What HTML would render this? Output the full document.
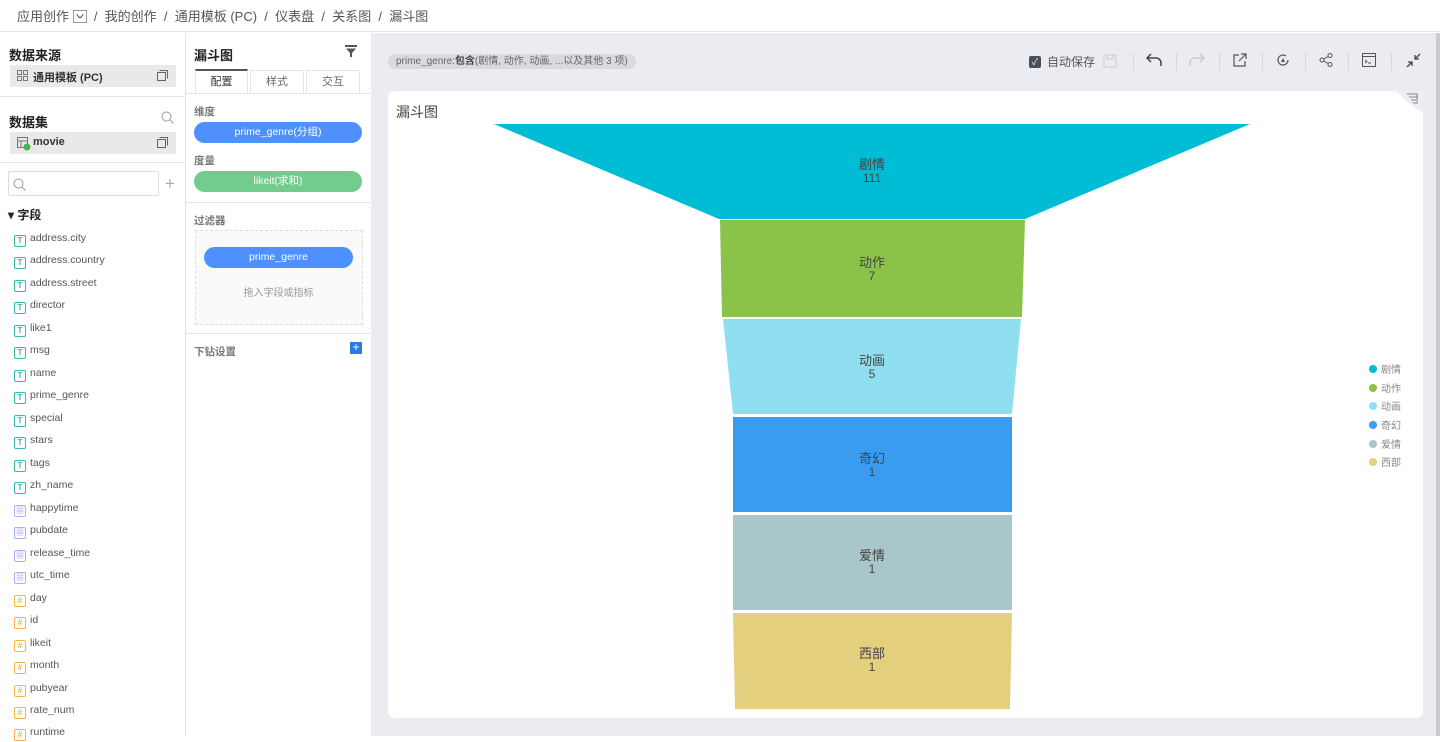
<!DOCTYPE html>
<html><head><meta charset="utf-8"><style>
*{box-sizing:border-box;margin:0;padding:0}
body{width:1440px;height:736px;overflow:hidden;background:#fff;font-family:"Liberation Sans","Noto Sans CJK SC",sans-serif;color:#333;position:relative}
.abs{position:absolute}
.top{left:0;top:0;width:1440px;height:32px;border-bottom:1px solid #e4e4e4;font-size:13px;color:#555;padding:6px 0 0 17px}
.left{left:0;top:33px;width:186px;height:703px;border-right:1px solid #e4e4e4}
.mid{left:186px;top:33px;width:185px;height:703px;background:#fff}
.main{left:371px;top:33px;width:1069px;height:703px;background:#ebecf1}
.h{font-size:13px;font-weight:bold;color:#222}
.box{background:#e9e9e9;height:22px;font-size:11px;font-weight:bold;color:#333;padding:4px 0 0 22px}
.field{position:absolute;left:14px;font-size:10.5px;color:#555;height:16px;line-height:12px}
.ic{display:inline-block;width:12px;height:12px;border:1px solid #39b7b0;border-radius:2px;font-size:8px;line-height:10px;text-align:center;color:#39b7b0;margin-right:4px;vertical-align:-2px;font-weight:bold}
.ic.d{border-color:#a9b2f0;color:#a9b2f0}
.ic.n{border-color:#f7b34a;color:#f7b34a}
.pill{position:absolute;height:21px;border-radius:11px;color:#fff;font-size:10.5px;text-align:center;line-height:21px}
.lbl{font-size:10.5px;color:#777;font-weight:bold}
.tb{position:absolute;top:53px;width:1px;height:18px;background:#d8d8d8}
</style></head><body>
<div class="abs top">应用创作 <svg width="14" height="13" style="vertical-align:-2px"><rect x=".5" y=".5" width="13" height="12" fill="none" stroke="#999"/><path d="M3.5 4.5l3.5 3.5 3.5-3.5" fill="none" stroke="#555"/></svg> &nbsp;/ &nbsp;我的创作 &nbsp;/ &nbsp;通用模板 (PC) &nbsp;/ &nbsp;仪表盘 &nbsp;/ &nbsp;关系图 &nbsp;/ &nbsp;漏斗图</div>

<div class="abs left">
 <div class="abs h" style="left:9px;top:12px">数据来源</div>
 <div class="abs box" style="left:10px;top:32px;width:166px;padding-left:23px">通用模板 (PC)</div>
 <svg class="abs" style="left:17px;top:37px" width="11" height="11"><rect x="0.5" y="0.5" width="4" height="4" fill="none" stroke="#777"/><rect x="6.5" y="0.5" width="4" height="4" fill="none" stroke="#777"/><rect x="0.5" y="6.5" width="4" height="4" fill="none" stroke="#777"/><rect x="6.5" y="6.5" width="4" height="4" fill="none" stroke="#777"/></svg>
 <svg class="abs" style="left:157px;top:37px" width="11" height="11"><rect x="0.5" y="2.5" width="8" height="8" fill="none" stroke="#666"/><path d="M2.5 .5h8v8" fill="none" stroke="#666"/></svg>
 <div class="abs" style="left:0;top:63px;width:185px;border-top:1px solid #e4e4e4"></div>
 <div class="abs h" style="left:9px;top:79px">数据集</div>
 <svg class="abs" style="left:161px;top:78px" width="13" height="13"><circle cx="5.5" cy="5.5" r="4.5" fill="none" stroke="#999"/><path d="M9 9l3.5 3.5" stroke="#999"/></svg>
 <div class="abs box" style="left:10px;top:99px;width:166px;padding-left:23px">movie</div>
 <svg class="abs" style="left:17px;top:104px" width="14" height="14"><rect x="0.5" y="0.5" width="10" height="10" fill="none" stroke="#777"/><path d="M0.5 4h10M4 4v7" stroke="#777"/><circle cx="10" cy="10" r="3.5" fill="#3fb950"/></svg>
 <svg class="abs" style="left:157px;top:104px" width="11" height="11"><rect x="0.5" y="2.5" width="8" height="8" fill="none" stroke="#666"/><path d="M2.5 .5h8v8" fill="none" stroke="#666"/></svg>
 <div class="abs" style="left:0;top:129px;width:185px;border-top:1px solid #e4e4e4"></div>
 <div class="abs" style="left:8px;top:138px;width:151px;height:25px;border:1px solid #ddd;border-radius:2px"></div>
 <svg class="abs" style="left:13px;top:145px" width="13" height="13"><circle cx="5.5" cy="5.5" r="4.5" fill="none" stroke="#999"/><path d="M9 9l3.5 3.5" stroke="#999"/></svg>
 <div class="abs" style="left:165px;top:141px;font-size:17px;color:#aaa">+</div>
 <div class="abs h" style="left:8px;top:173px;font-size:12px">▾ 字段</div>
</div>
<div class="field" style="top:232px"><span class="ic">T</span>address.city</div>
<div class="field" style="top:254px"><span class="ic">T</span>address.country</div>
<div class="field" style="top:277px"><span class="ic">T</span>address.street</div>
<div class="field" style="top:299px"><span class="ic">T</span>director</div>
<div class="field" style="top:322px"><span class="ic">T</span>like1</div>
<div class="field" style="top:344px"><span class="ic">T</span>msg</div>
<div class="field" style="top:367px"><span class="ic">T</span>name</div>
<div class="field" style="top:389px"><span class="ic">T</span>prime_genre</div>
<div class="field" style="top:412px"><span class="ic">T</span>special</div>
<div class="field" style="top:434px"><span class="ic">T</span>stars</div>
<div class="field" style="top:457px"><span class="ic">T</span>tags</div>
<div class="field" style="top:479px"><span class="ic">T</span>zh_name</div>
<div class="field" style="top:502px"><span class="ic d">▦</span>happytime</div>
<div class="field" style="top:524px"><span class="ic d">▦</span>pubdate</div>
<div class="field" style="top:547px"><span class="ic d">▦</span>release_time</div>
<div class="field" style="top:569px"><span class="ic d">▦</span>utc_time</div>
<div class="field" style="top:592px"><span class="ic n">#</span>day</div>
<div class="field" style="top:614px"><span class="ic n">#</span>id</div>
<div class="field" style="top:637px"><span class="ic n">#</span>likeit</div>
<div class="field" style="top:659px"><span class="ic n">#</span>month</div>
<div class="field" style="top:682px"><span class="ic n">#</span>pubyear</div>
<div class="field" style="top:704px"><span class="ic n">#</span>rate_num</div>
<div class="field" style="top:726px"><span class="ic n">#</span>runtime</div>

<div class="abs mid">
 <div class="abs h" style="left:8px;top:12px">漏斗图</div>
 <svg class="abs" style="left:159px;top:12px" width="12" height="12"><path d="M0 0h12v2H0zM1 3.5h10L7 8v4H5V8z" fill="#555"/></svg>
 <div class="abs" style="left:9px;top:36px;width:53px;height:25px;border-top:2px solid #555;border-left:1px solid #e4e4e4;border-right:1px solid #e4e4e4;font-size:11px;text-align:center;line-height:22px">配置</div>
 <div class="abs" style="left:64px;top:37px;width:54px;height:23px;border:1px solid #e4e4e4;border-bottom:none;font-size:11px;text-align:center;line-height:22px;color:#666">样式</div>
 <div class="abs" style="left:120px;top:37px;width:54px;height:23px;border:1px solid #e4e4e4;border-bottom:none;font-size:11px;text-align:center;line-height:22px;color:#666">交互</div>
 <div class="abs" style="left:0;top:60px;width:185px;border-top:1px solid #e4e4e4"></div>
 <div class="abs lbl" style="left:8px;top:71px">维度</div>
 <div class="pill" style="left:8px;top:89px;width:168px;background:#4d90fe">prime_genre(分组)</div>
 <div class="abs lbl" style="left:8px;top:120px">度量</div>
 <div class="pill" style="left:8px;top:138px;width:168px;background:#72cc8e">likeit(求和)</div>
 <div class="abs" style="left:0;top:169px;width:185px;border-top:1px solid #e4e4e4"></div>
 <div class="abs lbl" style="left:8px;top:180px">过滤器</div>
 <div class="abs" style="left:9px;top:197px;width:168px;height:95px;border:1px dashed #ddd;background:#fafafa"></div>
 <div class="pill" style="left:18px;top:214px;width:149px;background:#4d90fe">prime_genre</div>
 <div class="abs" style="left:0;top:251px;width:185px;text-align:center;font-size:10px;color:#999">拖入字段或指标</div>
 <div class="abs" style="left:0;top:300px;width:185px;border-top:1px solid #e4e4e4"></div>
 <div class="abs lbl" style="left:8px;top:311px">下钻设置</div>
 <div class="abs" style="left:164px;top:309px;width:12px;height:12px;background:#2c7be5;color:#fff;font-size:12px;line-height:11px;text-align:center">+</div>
</div>
<div class="abs" style="left:370px;top:366px;width:12px;height:34px;background:#fff;color:#bbb;font-size:12px;line-height:34px;text-align:center">‹</div>

<div class="abs main">
 <div class="abs" style="left:17px;top:21px;height:15px;padding:0 8px;border-radius:8px;background:#d9dae0;font-size:10px;color:#666;line-height:15px">prime_genre:<b style="color:#444">包含</b>(剧情, 动作, 动画, ...以及其他 3 项)</div>
 <div class="abs" style="left:658px;top:23px;width:12px;height:12px;background:#4a4f5c;border-radius:2px;color:#fff;font-size:9px;line-height:12px;text-align:center">✓</div>
 <div class="abs" style="left:676px;top:20px;font-size:12px;color:#555">自动保存</div>
 <svg class="abs" style="left:732px;top:21px" width="14" height="14"><rect x="1" y="1" width="12" height="12" fill="none" stroke="#ccc"/><rect x="4" y="1" width="6" height="4" fill="none" stroke="#ccc"/></svg>
 <svg class="abs" style="left:775px;top:20px" width="16" height="14"><path d="M5 1L1 5l4 4M1 5h9a5 5 0 0 1 5 5v3" fill="none" stroke="#444" stroke-width="1.5"/></svg>
 <svg class="abs" style="left:818px;top:20px" width="16" height="14"><path d="M11 1l4 4-4 4M15 5H6a5 5 0 0 0-5 5v3" fill="none" stroke="#ccc" stroke-width="1.5"/></svg>
 <svg class="abs" style="left:862px;top:20px" width="14" height="14"><path d="M6 2H1v11h11V8M8 1h5v5M13 1L6 8" fill="none" stroke="#555" stroke-width="1.2"/></svg>
 <svg class="abs" style="left:905px;top:20px" width="14" height="14"><path d="M12 7a5 5 0 1 1-2-4" fill="none" stroke="#555" stroke-width="1.2"/><path d="M7 5l-2 4h4z" fill="#555"/></svg>
 <svg class="abs" style="left:948px;top:20px" width="14" height="14"><circle cx="3" cy="7" r="2" fill="none" stroke="#555"/><circle cx="11" cy="2.5" r="2" fill="none" stroke="#555"/><circle cx="11" cy="11.5" r="2" fill="none" stroke="#555"/><path d="M5 6l4-2.5M5 8l4 2.5" stroke="#555"/></svg>
 <svg class="abs" style="left:991px;top:20px" width="14" height="14"><rect x=".5" y=".5" width="13" height="13" fill="none" stroke="#555"/><path d="M.5 3.5h13M3 7l2 1.5L3 10M6 10h3" fill="none" stroke="#555"/></svg>
 <svg class="abs" style="left:1035px;top:20px" width="15" height="15"><path d="M14 1L9 6M9 2v4h4M1 14l5-5M2 9h4v4" fill="none" stroke="#444" stroke-width="1.3"/></svg>
 <div class="tb" style="left:762px;top:20px"></div><div class="tb" style="left:805px;top:20px"></div><div class="tb" style="left:848px;top:20px"></div><div class="tb" style="left:891px;top:20px"></div><div class="tb" style="left:934px;top:20px"></div><div class="tb" style="left:977px;top:20px"></div><div class="tb" style="left:1020px;top:20px"></div>
 <div class="abs" style="left:1065px;top:0;width:4px;height:703px;background:#ccc"></div>
</div>

<div class="abs" style="left:388px;top:91px;width:1035px;height:627px;background:#fff;border-radius:6px"></div>
<div class="abs" style="left:396px;top:102px;font-size:14px;color:#444">漏斗图</div>
<svg class="abs" style="left:1396px;top:91px" width="27" height="22"><path d="M0 0h27v22C20 18 12 12 0 0z" fill="#eceef1"/><path d="M11 3h11M13 6h9M15 9h5M17 12h3M21 3v10" stroke="#888"/></svg>

<svg class="abs" style="left:0;top:0" width="1440" height="736" font-family="Liberation Sans,Noto Sans CJK SC,sans-serif">
 <polygon points="494,124 1250,124 1025,219 719,219" fill="#00bcd4"/>
 <polygon points="720,220 1025,220 1022,317 722,317" fill="#8bc34a"/>
 <polygon points="723,319 1021,319 1012,414 733,414" fill="#90dff1"/>
 <polygon points="733,417 1012,417 1012,512 733,512" fill="#399cf0"/>
 <polygon points="733,515 1012,515 1012,610 733,610" fill="#a9c6cb"/>
 <polygon points="733,613 1012,613 1010,709 735,709" fill="#e3cf7e"/>
 <g fill="#444" font-size="13" text-anchor="middle">
  <text x="872" y="169">剧情</text><text x="872" y="182" font-size="12">111</text>
  <text x="872" y="267">动作</text><text x="872" y="280" font-size="12">7</text>
  <text x="872" y="365">动画</text><text x="872" y="378" font-size="12">5</text>
  <text x="872" y="463">奇幻</text><text x="872" y="476" font-size="12">1</text>
  <text x="872" y="560">爱情</text><text x="872" y="573" font-size="12">1</text>
  <text x="872" y="658">西部</text><text x="872" y="671" font-size="12">1</text>
 </g>
 <g font-size="10" fill="#888">
  <circle cx="1373" cy="369" r="4" fill="#00bcd4"/><text x="1381" y="373">剧情</text>
  <circle cx="1373" cy="388" r="4" fill="#8bc34a"/><text x="1381" y="392">动作</text>
  <circle cx="1373" cy="406" r="4" fill="#90dff1"/><text x="1381" y="410">动画</text>
  <circle cx="1373" cy="425" r="4" fill="#399cf0"/><text x="1381" y="429">奇幻</text>
  <circle cx="1373" cy="444" r="4" fill="#a9c6cb"/><text x="1381" y="448">爱情</text>
  <circle cx="1373" cy="462" r="4" fill="#e3cf7e"/><text x="1381" y="466">西部</text>
 </g>
</svg>
</body></html>
